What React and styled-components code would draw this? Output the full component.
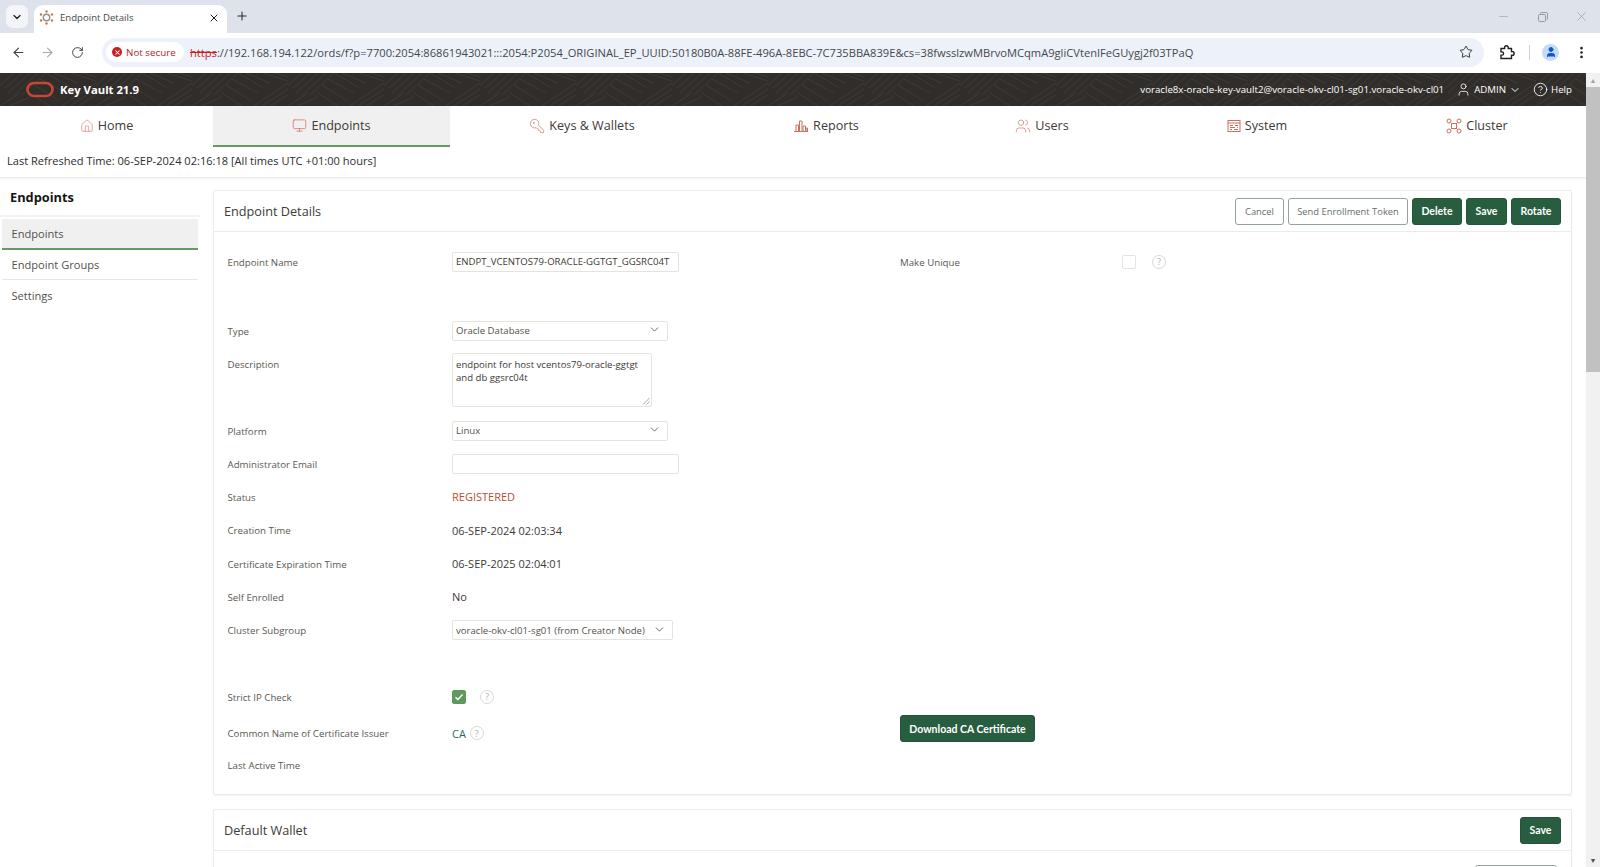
import React from "react";
import styled, { createGlobalStyle } from "styled-components";
import {
  ArrowLeft, ArrowRight, RotateCw, Star, EllipsisVertical, X, Plus, ChevronDown, Minus,
  House, Monitor, KeyRound, Users, User, CircleHelp,
} from "lucide-react";

const FONT = `"Open Sans", "Noto Sans", "Liberation Sans", sans-serif`;
const RED = "#cf6f63";

const Global = createGlobalStyle`
  html, body { margin: 0; padding: 0; height: 100%; overflow: hidden; background: #fff; }
  body { font-family: ${FONT}; color: #3d3a37; }
  * { box-sizing: border-box; }
`;

const Page = styled.div`
  width: 1600px;
  height: 867px;
  display: flex;
  flex-direction: column;
  overflow: hidden;
`;

/* browser chrome */
const TabStrip = styled.div`
  height: 33px;
  background: #dee3eb;
  display: flex;
  align-items: flex-end;
  padding-left: 6px;
  flex: none;
`;
const TabMenu = styled.div`
  width: 22px;
  height: 23px;
  margin: 0 6px 5px 0;
  background: #f3f5f9;
  border-radius: 7px;
  display: flex;
  align-items: center;
  justify-content: center;
  color: #1f1f1f;
`;
const BrowserTab = styled.div`
  width: 193px;
  height: 28px;
  background: #fff;
  border-radius: 9px 9px 0 0;
  display: flex;
  align-items: center;
  padding: 0 7px 3px 5px;
  gap: 6px;
  font-size: 9.6px;
  color: #45474a;
`;
const TabTitle = styled.span`
  flex: 1;
`;
const NewTab = styled.div`
  margin: 0 0 7px 8px;
  height: 20px;
  display: flex;
  align-items: center;
  color: #2a2b2d;
`;
const WindowControls = styled.div`
  margin-left: auto;
  height: 33px;
  display: flex;
  align-items: center;
  padding-right: 11px;
  color: #8f9297;
`;
const WindowButton = styled.span`
  display: flex;
  margin-left: ${(p) => p.$gap || 0}px;
`;
const Toolbar = styled.div`
  height: 40px;
  background: #fff;
  display: flex;
  align-items: center;
  flex: none;
  padding: 0 0 2px 6px;
  color: #44474a;
`;
const ToolIcon = styled.div`
  width: ${(p) => p.$w}px;
  flex: none;
  display: flex;
  justify-content: center;
  color: ${(p) => (p.$dim ? "#a6a8ab" : "#3f4245")};
`;
const AddressBar = styled.div`
  width: 1382px;
  height: 29px;
  margin: 0 12px 0 11px;
  flex: none;
  background: #edf2fa;
  border-radius: 15px;
  display: flex;
  align-items: center;
  padding: 0 11px 0 4px;
`;
const NotSecure = styled.div`
  height: 20px;
  width: 78px;
  flex: none;
  background: #fff;
  border-radius: 10px;
  display: flex;
  align-items: center;
  gap: 4px;
  padding-left: 6px;
  font-size: 9.8px;
  color: #b3261e;
`;
const ErrorDot = styled.span`
  width: 10px;
  height: 10px;
  border-radius: 50%;
  background: #c5221f;
  color: #fff;
  display: flex;
  align-items: center;
  justify-content: center;
`;
const Url = styled.div`
  flex: 1;
  margin-left: 6px;
  font-size: 11.15px;
  color: #45474a;
  white-space: nowrap;
  overflow: hidden;
`;
const Https = styled.span`
  color: #c5221f;
  text-decoration: line-through;
`;
const Separator = styled.div`
  width: 1px;
  height: 15px;
  background: #c6d3e6;
  margin: 0 12px 0 11px;
  flex: none;
`;
const Avatar = styled.div`
  width: 17px;
  height: 17px;
  border-radius: 50%;
  background: #c5daf5;
  color: #0b57d0;
  display: flex;
  align-items: center;
  justify-content: center;
  margin-right: 12px;
  flex: none;
`;

/* page area with the window's scrollbar */
const PageArea = styled.div`
  flex: 1;
  display: flex;
  min-height: 0;
`;
const Viewport = styled.div`
  width: 1586px;
  display: flex;
  flex-direction: column;
  overflow: hidden;
`;
const ScrollTrack = styled.div`
  width: 14px;
  background: #f1f1f1;
  display: flex;
  flex-direction: column;
  align-items: center;
`;
const ScrollArrow = styled.div`
  height: 14px;
  display: flex;
  align-items: center;
  font-size: 7px;
  color: ${(p) => (p.$dim ? "#a3a3a3" : "#505050")};
  margin-top: ${(p) => (p.$bottom ? "auto" : "0")};
`;
const ScrollThumb = styled.div`
  width: 100%;
  height: 285px;
  background: #c1c1c1;
`;

const AppHeader = styled.header`
  position: relative;
  height: 33px;
  flex: none;
  background: #312d2a;
  color: #fff;
  display: flex;
  align-items: center;
  padding: 0 14px 0 26px;
  overflow: hidden;
`;
const HeaderTexture = styled.svg`
  position: absolute;
  inset: 0;
  width: 100%;
  height: 100%;
`;
const Logo = styled.svg`
  position: relative;
  width: 28px;
  height: 17px;
  margin-right: 6px;
`;
const Product = styled.span`
  position: relative;
  font-size: 11.3px;
  font-weight: 700;
`;
const HeaderRight = styled.div`
  position: relative;
  margin-left: auto;
  display: flex;
  align-items: center;
  font-size: 9.7px;
`;
const HeaderItem = styled.span`
  display: flex;
  align-items: center;
  gap: 3px;
  margin-left: ${(p) => p.$gap || 0}px;
`;

const Nav = styled.nav`
  height: 41px;
  flex: none;
  display: flex;
`;
const NavItem = styled.div`
  width: ${(p) => p.$w}px;
  flex: none;
  display: flex;
  align-items: center;
  justify-content: center;
  gap: 4px;
  font-size: 12.6px;
  color: #3d3a37;
  background: ${(p) => (p.$active ? "#f0f0f0" : "transparent")};
  border-bottom: 2px solid ${(p) => (p.$active ? "#679a63" : "transparent")};
  svg { color: ${RED}; flex: none; }
`;
const RefreshBar = styled.div`
  height: 31px;
  flex: none;
  padding: 0 0 4px 7px;
  font-size: 11.07px;
  color: #2f2c29;
  display: flex;
  align-items: center;
  border-bottom: 1px solid #ececec;
  box-shadow: 0 1px 2px rgba(0, 0, 0, 0.05);
`;
const Body = styled.div`
  flex: 1;
  display: flex;
  min-height: 0;
`;
const Sidebar = styled.aside`
  width: 200px;
  flex: none;
`;
const SideTitle = styled.div`
  height: 39px;
  padding: 1px 0 0 10px;
  display: flex;
  align-items: center;
  font-size: 12.8px;
  font-weight: 700;
  color: #161513;
  border-bottom: 2px solid #f2f2f2;
`;
const SideItem = styled.div`
  height: ${(p) => (p.$active ? 31 : 30)}px;
  margin: ${(p) => (p.$active ? "2px" : "0")} 2px 0;
  padding-left: 9.5px;
  display: flex;
  align-items: center;
  font-size: 11.1px;
  color: #55524e;
  background: ${(p) => (p.$active ? "#f0f0f0" : "transparent")};
  border-bottom: ${(p) => (p.$active ? "2px solid #679a63" : p.$last ? "0" : "1px solid #e6e6e6")};
`;
const Main = styled.main`
  flex: 1;
  padding: 12px 14px 0 13px;
  display: flex;
  flex-direction: column;
  gap: 14px;
`;
const Panel = styled.section`
  flex: none;
  border: 1px solid #ebebeb;
  border-radius: 2px;
  box-shadow: 0 1px 2px rgba(0, 0, 0, 0.06);
`;
const PanelHead = styled.div`
  height: 41px;
  padding: 0 10px;
  display: flex;
  align-items: center;
  gap: 4px;
  border-bottom: 1px solid #ebebeb;
`;
const PanelTitle = styled.h2`
  margin: 0 auto 0 0;
  font-size: 12.7px;
  font-weight: 400;
  color: #3d3a37;
`;
const Button = styled.button`
  height: 27px;
  width: ${(p) => p.$w}px;
  padding: 0;
  border-radius: 3px;
  font-size: ${(p) => (p.$outline ? 9.4 : 10.5)}px;
  font-family: ${(p) => (p.$outline ? FONT : `"Lato", ${FONT}`)};
  font-weight: ${(p) => (p.$outline ? 400 : 700)};
  color: ${(p) => (p.$outline ? "#66706a" : "#fff")};
  background: ${(p) => (p.$outline ? "#fff" : "#285e3f")};
  border: 1px solid ${(p) => (p.$outline ? "#8fa397" : "#22553a")};
`;
const DownloadButton = styled(Button)`
  margin-bottom: 9px;
`;
const Form = styled.div`
  padding: 13px 0 13px 13.5px;
`;
const Row = styled.div`
  height: ${(p) => p.$h || 33}px;
  margin-bottom: ${(p) => p.$after || 0}px;
  display: grid;
  grid-template-columns: 224.5px 448px 222px 1fr;
  align-items: ${(p) => (p.$top ? "start" : "center")};
`;
const Label = styled.div`
  font-size: 9.7px;
  color: #5a5753;
  padding-top: ${(p) => (p.$top ? 11 : 1)}px;
`;
const Value = styled.div`
  font-size: 11px;
  display: flex;
  align-items: center;
  color: ${(p) => p.$color || "#3d3a37"};
`;
const TextInput = styled.div`
  width: ${(p) => p.$w || 227}px;
  height: 20px;
  border: 1px solid #e6e4da;
  border-radius: 2px;
  padding: 0 3px;
  font-size: 9.6px;
  line-height: 18px;
  color: #3d3a37;
  white-space: nowrap;
`;
const Select = styled.div`
  width: ${(p) => p.$w}px;
  height: 20px;
  border: 1px solid #e6e4da;
  border-radius: 2px;
  padding: 0 6px 0 3px;
  display: flex;
  align-items: center;
  justify-content: space-between;
  font-size: 9.6px;
  color: #55524e;
  svg { color: #4a4a4a; flex: none; margin-top: -2px; }
`;
const TextArea = styled.div`
  position: relative;
  width: 200px;
  height: 54px;
  margin-top: 6px;
  border: 1px solid #e6e4da;
  border-radius: 2px;
  padding: 4px 3px;
  font-size: 9.6px;
  line-height: 13.3px;
  color: #3d3a37;
`;
const ResizeGrip = styled.svg`
  position: absolute;
  right: 1px;
  bottom: 1px;
  width: 8px;
  height: 8px;
`;
const Checkbox = styled.span`
  width: 14px;
  height: 14px;
  border-radius: 2px;
  flex: none;
  display: flex;
  align-items: center;
  justify-content: center;
  color: #fff;
  border: 1px solid ${(p) => (p.$checked ? "#5f9a5d" : "#e4e4e0")};
  background: ${(p) => (p.$checked ? "#5f9a5d" : "#fff")};
`;
const HelpDot = styled.span`
  width: 14px;
  height: 14px;
  margin-left: ${(p) => p.$gap}px;
  border: 1px solid #d8d8d8;
  border-radius: 50%;
  flex: none;
  display: flex;
  align-items: center;
  justify-content: center;
  font-size: 8.5px;
  color: #a9a9a9;
`;
const WalletActions = styled.div`
  display: flex;
  justify-content: flex-end;
  padding: 14px 14px 0 0;
`;

function BarsIcon() {
  return (
    <svg width="16" height="16" viewBox="0 0 16 16" fill="none" stroke="currentColor" strokeWidth="1">
      <path d="M1 13.5h14M3 13V7h2.5v6M6.5 13V3h2.5v10M10 13V8h2.5v5M13 13v-3h1.5v3" />
    </svg>
  );
}
function PanelIcon() {
  return (
    <svg width="14" height="14" viewBox="0 0 14 14" fill="none" stroke="currentColor" strokeWidth="1">
      <rect x="1" y="1.5" width="12" height="11" />
      <path d="M1 4h12M3 6.5h3M8 6.5h3M3 8.5h5M10 8.5h1M3 10.5h2M7 10.5h4" />
    </svg>
  );
}
function ClusterIcon() {
  return (
    <svg width="16" height="16" viewBox="0 0 16 16" fill="none" stroke="currentColor" strokeWidth="1">
      <circle cx="3" cy="3" r="2" /><circle cx="13" cy="3" r="2" />
      <circle cx="3" cy="13" r="2" /><circle cx="13" cy="13" r="2" />
      <rect x="5.5" y="5.5" width="5" height="5" />
      <path d="M4.5 4.5l1 1M11.5 4.5l-1 1M4.5 11.5l1-1M11.5 11.5l-1-1" />
    </svg>
  );
}
function ExtensionIcon() {
  return (
    <svg width="16" height="16" viewBox="0 0 16 16" fill="none" stroke="#1f1f1f" strokeWidth="1.4">
      <path d="M2 4.5h3.6V3.6a1.8 1.8 0 0 1 3.6 0v.9h3.3v3h.7a1.9 1.9 0 0 1 0 3.8h-.7v3.2H2v-3.4h1a1.6 1.6 0 0 0 0-3.2H2z" />
    </svg>
  );
}
function Favicon() {
  return (
    <svg width="15" height="15" viewBox="0 0 15 15">
      <circle cx="7.5" cy="7.5" r="3.2" fill="none" stroke="#8a8f94" strokeWidth="1.4" />
      <g fill="#c9793f">
        <circle cx="7.5" cy="1.5" r="1.2" /><circle cx="7.5" cy="13.5" r="1.2" />
        <circle cx="2" cy="4.5" r="1.2" /><circle cx="13" cy="4.5" r="1.2" />
        <circle cx="2" cy="10.5" r="1.2" /><circle cx="13" cy="10.5" r="1.2" />
      </g>
    </svg>
  );
}
function Texture() {
  return (
    <HeaderTexture aria-hidden="true">
      <defs>
        <pattern id="weave" width="96" height="33" patternUnits="userSpaceOnUse">
          <g stroke="#443f3b" strokeWidth="0.7" fill="none">
            <path d="M0 12L14 0M4 16L22 0M8 20L30 0M14 22L38 0M22 22L46 0" />
            <path d="M46 0L70 14M54 0L78 10M40 6L66 20M34 12L60 28M30 20L50 33" />
            <path d="M70 33L96 16M62 33L96 10M78 33L96 22M0 33L20 20M10 33L30 24" />
            <path d="M72 0L96 8M82 0L96 4" />
          </g>
        </pattern>
      </defs>
      <rect width="100%" height="100%" fill="url(#weave)" />
    </HeaderTexture>
  );
}

const navItems = [
  { text: "Home", w: 213, icon: <House size={14} strokeWidth={1} /> },
  { text: "Endpoints", w: 237, active: true, icon: <Monitor size={15} strokeWidth={1.2} /> },
  { text: "Keys & Wallets", w: 264, icon: <KeyRound size={16} strokeWidth={1} style={{ transform: "scaleX(-1)" }} /> },
  { text: "Reports", w: 224, icon: <BarsIcon /> },
  { text: "Users", w: 208, icon: <Users size={16} strokeWidth={1} /> },
  { text: "System", w: 222, icon: <PanelIcon /> },
  { text: "Cluster", w: 218, icon: <ClusterIcon /> },
];

export default function App() {
  return (
    <Page>
      <Global />
      <TabStrip>
        <TabMenu><ChevronDown size={12} strokeWidth={2.5} /></TabMenu>
        <BrowserTab>
          <Favicon />
          <TabTitle>Endpoint Details</TabTitle>
          <X size={12} strokeWidth={2} color="#1f1f1f" />
        </BrowserTab>
        <NewTab><Plus size={14} strokeWidth={1.8} /></NewTab>
        <WindowControls>
          <WindowButton><Minus size={13} strokeWidth={1} /></WindowButton>
          <WindowButton $gap={28}>
            <svg width="10" height="10" viewBox="0 0 10 10" fill="none" stroke="currentColor" strokeWidth="0.9">
              <rect x="0.5" y="2.5" width="7" height="7" rx="1" /><path d="M2.5 2.5V1.5a1 1 0 0 1 1-1h5a1 1 0 0 1 1 1v5a1 1 0 0 1-1 1" />
            </svg>
          </WindowButton>
          <WindowButton $gap={26}><X size={15} strokeWidth={1} /></WindowButton>
        </WindowControls>
      </TabStrip>
      <Toolbar>
        <ToolIcon $w={24}><ArrowLeft size={15} strokeWidth={1.7} /></ToolIcon>
        <ToolIcon $w={34} $dim><ArrowRight size={15} strokeWidth={1.7} /></ToolIcon>
        <ToolIcon $w={27}><RotateCw size={13} strokeWidth={1.8} /></ToolIcon>
        <AddressBar>
          <NotSecure>
            <ErrorDot><X size={7} strokeWidth={3.5} /></ErrorDot>
            Not secure
          </NotSecure>
          <Url>
            <Https>https</Https>://192.168.194.122/ords/f?p=7700:2054:86861943021:::2054:P2054_ORIGINAL_EP_UUID:50180B0A-88FE-496A-8EBC-7C735BBA839E&amp;cs=38fwsslzwMBrvoMCqmA9gliCVtenIFeGUygj2f03TPaQ
          </Url>
          <Star size={14} strokeWidth={1.5} color="#1f1f1f" />
        </AddressBar>
        <ToolIcon $w={22}><ExtensionIcon /></ToolIcon>
        <Separator />
        <Avatar><User size={12} fill="currentColor" /></Avatar>
        <ToolIcon $w={20}><EllipsisVertical size={15} strokeWidth={2.2} color="#1f1f1f" /></ToolIcon>
      </Toolbar>
      <PageArea>
        <Viewport>
          <AppHeader>
            <Texture />
            <Logo viewBox="0 0 28 17">
              <rect x="1.5" y="2" width="25" height="13" rx="6.5" fill="none" stroke="#c74634" strokeWidth="2.6" />
            </Logo>
            <Product>Key Vault 21.9</Product>
            <HeaderRight>
              <span>voracle8x-oracle-key-vault2@voracle-okv-cl01-sg01.voracle-okv-cl01</span>
              <HeaderItem $gap={12}><User size={15} strokeWidth={1.3} />ADMIN<ChevronDown size={12} /></HeaderItem>
              <HeaderItem $gap={12}><CircleHelp size={15} strokeWidth={1.4} />Help</HeaderItem>
            </HeaderRight>
          </AppHeader>
          <Nav>
            {navItems.map((item) => (
              <NavItem key={item.text} $w={item.w} $active={item.active}>
                {item.icon}
                {item.text}
              </NavItem>
            ))}
          </Nav>
          <RefreshBar>Last Refreshed Time: 06-SEP-2024 02:16:18 [All times UTC +01:00 hours]</RefreshBar>
          <Body>
            <Sidebar>
              <SideTitle>Endpoints</SideTitle>
              <SideItem $active>Endpoints</SideItem>
              <SideItem>Endpoint Groups</SideItem>
              <SideItem $last>Settings</SideItem>
            </Sidebar>
            <Main>
              <Panel>
                <PanelHead>
                  <PanelTitle>Endpoint Details</PanelTitle>
                  <Button $outline $w={49}>Cancel</Button>
                  <Button $outline $w={120}>Send Enrollment Token</Button>
                  <Button $w={50}>Delete</Button>
                  <Button $w={41}>Save</Button>
                  <Button $w={50}>Rotate</Button>
                </PanelHead>
                <Form>
                  <Row $after={36}>
                    <Label>Endpoint Name</Label>
                    <TextInput>ENDPT_VCENTOS79-ORACLE-GGTGT_GGSRC04T</TextInput>
                    <Label>Make Unique</Label>
                    <Value>
                      <Checkbox />
                      <HelpDot $gap={16}>?</HelpDot>
                    </Value>
                  </Row>
                  <Row>
                    <Label>Type</Label>
                    <Select $w={216}>Oracle Database<ChevronDown size={13} strokeWidth={1.5} /></Select>
                  </Row>
                  <Row $h={67} $top>
                    <Label $top>Description</Label>
                    <TextArea>
                      endpoint for host vcentos79-oracle-ggtgt and db ggsrc04t
                      <ResizeGrip viewBox="0 0 8 8"><path d="M7.5 1L1 7.5M7.5 4.5L4.5 7.5" stroke="#8a8a8a" strokeWidth="0.7" /></ResizeGrip>
                    </TextArea>
                  </Row>
                  <Row>
                    <Label>Platform</Label>
                    <Select $w={216}>Linux<ChevronDown size={13} strokeWidth={1.5} /></Select>
                  </Row>
                  <Row>
                    <Label>Administrator Email</Label>
                    <TextInput />
                  </Row>
                  <Row>
                    <Label>Status</Label>
                    <Value $color="#b5502f">REGISTERED</Value>
                  </Row>
                  <Row $h={34}>
                    <Label>Creation Time</Label>
                    <Value>06-SEP-2024 02:03:34</Value>
                  </Row>
                  <Row>
                    <Label>Certificate Expiration Time</Label>
                    <Value>06-SEP-2025 02:04:01</Value>
                  </Row>
                  <Row>
                    <Label>Self Enrolled</Label>
                    <Value>No</Value>
                  </Row>
                  <Row $h={34} $after={33}>
                    <Label>Cluster Subgroup</Label>
                    <Select $w={221}>voracle-okv-cl01-sg01 (from Creator Node)<ChevronDown size={13} strokeWidth={1.5} /></Select>
                  </Row>
                  <Row $h={33} $after={2}>
                    <Label>Strict IP Check</Label>
                    <Value>
                      <Checkbox $checked>
                        <svg width="10" height="10" viewBox="0 0 10 10" fill="none" stroke="currentColor" strokeWidth="1.4"><path d="M1.5 5.2l2.4 2.3 4.6-5" /></svg>
                      </Checkbox>
                      <HelpDot $gap={14}>?</HelpDot>
                    </Value>
                  </Row>
                  <Row>
                    <Label>Common Name of Certificate Issuer</Label>
                    <Value $color="#2f6b5c">
                      CA
                      <HelpDot $gap={4}>?</HelpDot>
                    </Value>
                    <DownloadButton $w={135}>Download CA Certificate</DownloadButton>
                  </Row>
                  <Row>
                    <Label>Last Active Time</Label>
                  </Row>
                </Form>
              </Panel>
              <Panel>
                <PanelHead>
                  <PanelTitle>Default Wallet</PanelTitle>
                  <Button $w={41}>Save</Button>
                </PanelHead>
                <WalletActions>
                  <Button $outline $w={82} />
                </WalletActions>
              </Panel>
            </Main>
          </Body>
        </Viewport>
        <ScrollTrack>
          <ScrollArrow $dim>▲</ScrollArrow>
          <ScrollThumb />
          <ScrollArrow $bottom>▼</ScrollArrow>
        </ScrollTrack>
      </PageArea>
    </Page>
  );
}
